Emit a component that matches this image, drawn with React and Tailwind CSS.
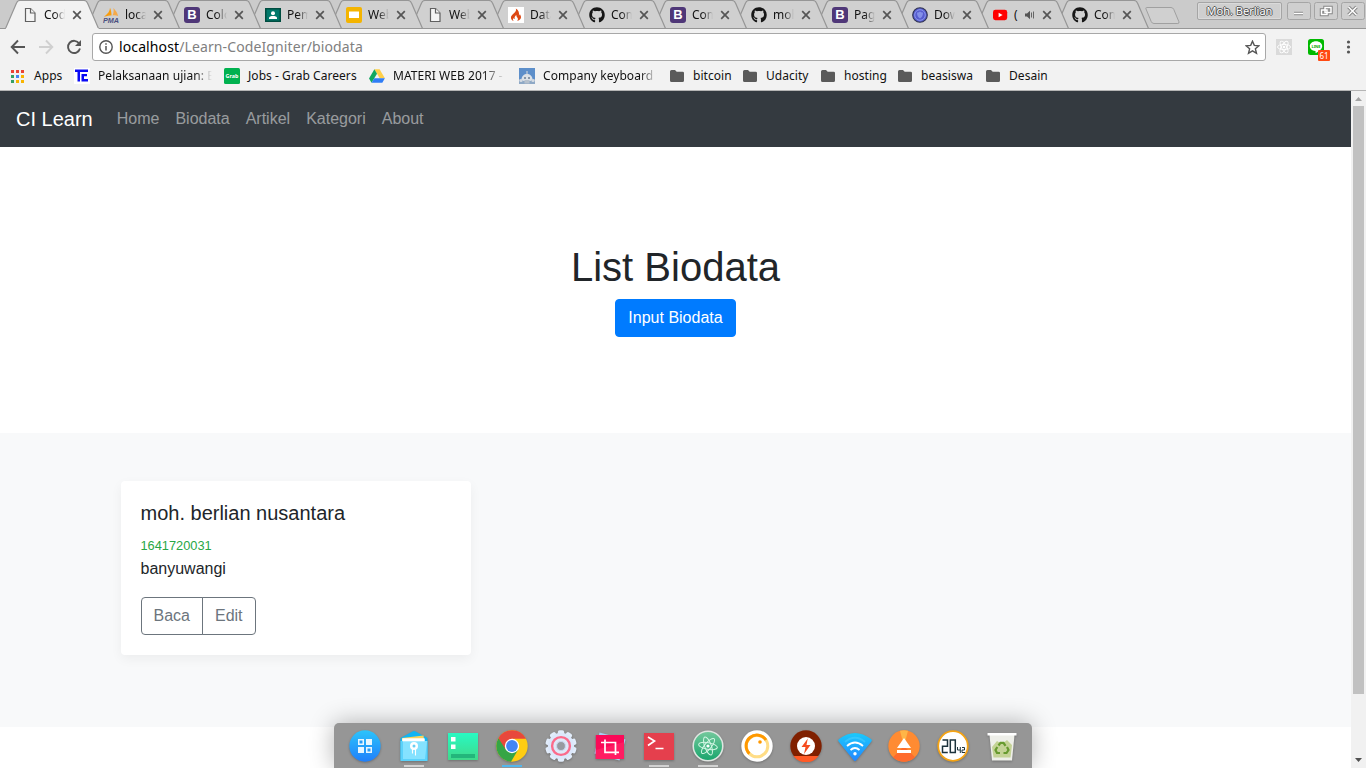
import React from "react";
import { FaGithub } from "react-icons/fa";

const FileIcon = () => (
  <svg width="16" height="16" viewBox="0 0 16 16" fill="#f4f4f4" stroke="#606060" strokeWidth="1.200">
    <path d="M3.500 1.500H8.500l4.500 4.500v8.500H3.500z" /><path d="M8.500 1.500v4.500h4.500" />
  </svg>
);
const PmaIcon = () => (
  <svg width="16" height="16" viewBox="0 0 16 16">
    <path d="M7 .8C7 4 4.800 7 1 9.800c3-.8 5.500-1.200 7.500-1.200C8.500 6 8 3 7 .8z" fill="#f89c0e" />
    <path d="M10.500 1c2.200 2.500 4 5 4.600 8-2-.6-3.600-.8-5.600-.5C10.500 6.500 10.900 4 10.500 1z" fill="#f5a94a" />
    <text x="0" y="15.500" fontSize="7" fontWeight="700" fontStyle="italic" fill="#4a4f80" fontFamily="Liberation Sans" textLength="16" lengthAdjust="spacingAndGlyphs">PMA</text>
  </svg>
);
const BootIcon = () => (
  <span className="flex h-4 w-4 items-center justify-center rounded-[3px] bg-[#4f3778] font-['Liberation_Sans',sans-serif] text-[13px] leading-4 font-bold text-white">B</span>
);
const ClassIcon = () => (
  <svg width="16" height="16" viewBox="0 0 16 16">
    <path d="M0 1h16v14H0z" fill="#004d40" /><path d="M1.500 2.500h13v11h-13z" fill="#00796b" />
    <circle cx="8" cy="6.200" r="2" fill="#fff" /><path d="M4 12v-1c0-2.600 8-2.600 8 0v1z" fill="#fff" />
  </svg>
);
const SlidesIcon = () => (
  <svg width="16" height="16" viewBox="0 0 16 16"><rect width="16" height="16" rx="2" fill="#f4b400" /><path d="M3 4.500h10v6.500H3z" fill="#fff" /></svg>
);
const FlameIcon = () => (
  <svg width="16" height="16" viewBox="0 0 16 16">
    <path d="M0 0h16v16H0z" fill="#fff" />
    <path d="M7.800 1.500c.8 2-.3 3.300-1.900 4.800C4 8 2.600 9.300 3 11.200c.3 1.500 1.400 2.500 2.900 2.900-1-.9-1.300-2-.6-3.200.3.900.9 1.200 1.400 1-.5-1.700.3-2.900 1.700-3.900-.2 1.400.5 1.900 1.100 2.700.7 1 .5 2.400-.4 3.400 2-.4 3.700-1.600 3.900-3.500.2-1.600-.7-2.600-1.200-3.700 0 .8-.3 1.300-.9 1.500C11.500 5.800 10.500 3 7.800 1.500z" fill="#dd4814" />
  </svg>
);
const GitIcon = () => <FaGithub size={16} color="#161616" />;
const RomIcon = () => (
  <svg width="16" height="16" viewBox="0 0 16 16">
    <circle cx="8" cy="8" r="7.300" fill="#565ccf" stroke="#303350" strokeWidth="1.100" />
    <circle cx="8" cy="8" r="5.300" fill="none" stroke="#8c98ec" strokeWidth="1" />
    <path d="M5 5.500c1.500 0 2.300-.5 3-1 .7.500 1.500 1 3 1 0 3-1 5-3 6-2-1-3-3-3-6z" fill="#8490e8" />
  </svg>
);
const TubeIcon = () => (
  <svg width="16" height="16" viewBox="0 0 16 16"><rect x="1" y="2.800" width="14.200" height="10.400" rx="2.400" fill="#f00" /><path d="M6.600 5.700v4.600l4-2.300z" fill="#fff" /></svg>
);
const tabs = [
  ["Code", FileIcon], ["localh", PmaIcon], ["Color", BootIcon], ["Pemr", ClassIcon], ["Web", SlidesIcon],
  ["Web", FileIcon], ["Data", FlameIcon], ["Com", GitIcon], ["Com", BootIcon], ["moh", GitIcon],
  ["Page", BootIcon], ["Dow", RomIcon], ["(", TubeIcon], ["Com", GitIcon],
];

const Tab = ({ title, Icon, index }) => (
  <div className={`relative h-[29px] shrink-0 ${index < 10 ? "w-[81px]" : "w-[80px]"}`} style={{ zIndex: 20 - index }}>
    <svg className="absolute top-0 left-0" width="96" height="29" viewBox="0 0 96 29">
      <path d="M.5 28.500L11.500 3Q12.500 .5 14.800 .5H79Q81.500 .5 82.500 3L93.500 28.500" fill={index === 0 ? "#f2f2f2" : "#d0d0d0"} stroke="#969696" strokeWidth="1.200" />
      {index > 0 && <path d="M0 28.500H95" stroke="#969696" />}
      {index === 0 && <path d="M1 28.500H93.500" stroke="#f2f2f2" strokeWidth="1.200" />}
    </svg>
    <div className="relative flex h-[29px] items-center pl-[17px] pt-px">
      <span className="h-4 w-4 shrink-0"><Icon /></span>
      <span className={`ml-[6px] overflow-hidden whitespace-nowrap text-[12px] leading-4 text-[#111] ${title === "(" ? "w-[8px]" : "w-[21px] [mask-image:linear-gradient(to_right,#000_50%,transparent)]"}`}>{title}</span>
      {title === "(" && (
        <svg className="ml-[3px] shrink-0" width="11" height="10" viewBox="0 0 11 10"><path d="M0 3.500h2L5 .8v8.400L2 6.500H0z" fill="#555" /><path d="M6.500 2.500v5M8.500 1.500v7" stroke="#666" /></svg>
      )}
      <svg className={`shrink-0 ${title === "(" ? "ml-[6px]" : "ml-[7px]"}`} width="10" height="10" viewBox="0 0 10 10"><path d="M1.200 1.200l7.600 7.600M8.800 1.200L1.200 8.800" stroke="#555" strokeWidth="1.700" /></svg>
    </div>
  </div>
);

const Folder = () => (
  <svg width="16" height="16" viewBox="0 0 16 16"><path d="M1 3.500Q1 2 2.500 2H6l1.700 1.700h6q1.300 0 1.300 1.300v7.500q0 1.500-1.500 1.500h-11Q1 14 1 12.500z" fill="#5a5a5a" /></svg>
);
const AppsIcon = () => (
  <svg className="ml-px" width="13" height="13" viewBox="0 0 13 13">
    {["#ea4335", "#ea4335", "#ea4335", "#34a065", "#4285f4", "#f8b400", "#34a065", "#f8b400", "#f8b400"].map((c, i) => (
      <rect key={i} x={(i % 3) * 5} y={Math.floor(i / 3) * 5} width="3" height="3" fill={c} />
    ))}
  </svg>
);
const TeIcon = () => (
  <svg width="16" height="16" viewBox="0 0 16 16"><path d="M0 0h16v16H0z" fill="#fff" /><path d="M1 1.500h13v2.500H1z M3.500 4H6v9.500H3.500zM7.500 6H13v2.200H7.500zM7.500 11H14v2.500H7.500zM7.500 6h2.500v7.500H7.500z" fill="#0b0bf5" /></svg>
);
const GrabIcon = () => (
  <svg width="16" height="16" viewBox="0 0 16 16"><rect width="16" height="16" rx="1.500" fill="#00b14f" /><text x="1.500" y="10" fontSize="6" fontWeight="700" fill="#fff" textLength="13" lengthAdjust="spacingAndGlyphs">Grab</text></svg>
);
const DriveIcon = () => (
  <svg width="16" height="16" viewBox="0 0 16 16"><path d="M5.400 1.300h5.200l5.300 9h-5.200z" fill="#ffcf48" /><path d="M5.400 1.300L0 10.400l2.600 4.400 5.400-9z" fill="#11a861" /><path d="M5.300 10.300h10.600l-2.600 4.500H2.600z" fill="#2f7df6" /></svg>
);
const RobotIcon = () => (
  <svg width="16" height="16" viewBox="0 0 16 16"><path d="M0 0h16v16H0z" fill="#5d8fca" /><path d="M0 11h16v5H0z" fill="#8fa9c6" /><path d="M2.500 11.500C2.500 4 13.500 4 13.500 11.500l-2 1.500h-7z" fill="#dce2e8" /><path d="M5.500 12h5v3.500h-5z" fill="#b6c1cd" /><circle cx="2" cy="12.500" r="1.600" fill="#d5dbe2" /><circle cx="14" cy="12.500" r="1.600" fill="#d5dbe2" /><circle cx="6" cy="10" r="1" fill="#6d7f95" /><circle cx="10" cy="10" r="1" fill="#6d7f95" /><path d="M8 3v4" stroke="#ddd" /></svg>
);
const Mark = ({ icon, children, className }) => (
  <div className={`flex shrink-0 items-center ${className}`}>
    <span className="flex w-6 shrink-0 items-center">{icon}</span>
    {children}
  </div>
);

const RoundIcon = ({ children }) => <svg width="32" height="32" viewBox="0 0 32 32">{children}</svg>;
const gearTeeth = Array.from({ length: 10 }, (_, i) => i * 36);
const dock = [
  <RoundIcon><defs><linearGradient id="la" x2="0" y2="1"><stop stopColor="#2cc4fb" /><stop offset="1" stopColor="#207ffb" /></linearGradient></defs><circle cx="16" cy="16" r="15.700" fill="url(#la)" /><path d="M9 9h6v6H9zM17 9h6v6h-6zM9 17h6v6H9zM17 17h6v6h-6z" fill="#e8f6ff" /><path d="M10.500 10.500h3v3h-3zM18.500 18.500h3v3h-3z" fill="#2a9bf5" /></RoundIcon>,
  <RoundIcon><path d="M2.500 8L14 1.700q2-1.200 4 0L29.500 8V30h-27z" fill="#10b4f4" /><path d="M4 8l21.500-2.500 1 8H4z" fill="#fbd45c" /><path d="M4.500 8.500h22v8h-22z" fill="#fff" /><path d="M2.500 11h27v20h-27z" fill="#5bd2fb" /><path d="M5 11h24l-2 18H5z" fill="#85e2ff" /><path d="M4.500 8.500h22v2.800h-22z" fill="#fff" /><circle cx="16" cy="16" r="4" fill="#fff" /><circle cx="16" cy="16" r="1.500" fill="#68cef3" /><path d="M14.500 19v4.500M17.500 19v6.500" stroke="#fff" strokeWidth="1.100" /></RoundIcon>,
  <RoundIcon><defs><linearGradient id="ga" x2="0" y2="1"><stop stopColor="#28f9c3" /><stop offset="1" stopColor="#40d98a" /></linearGradient></defs><path d="M1 3h30v27H1z" fill="url(#ga)" /><path d="M4 7h4.500v4.500H4zM4 14.500h4.500V19H4z" fill="#fff" /><path d="M4 24h24v4H4z" fill="#23b67b" /></RoundIcon>,
  <RoundIcon>
    <circle cx="16" cy="16" r="15.700" fill="#ffcd12" />
    <path d="M16 16L2.400 8.150A15.700 15.700 0 0 0 15 31.700L22.240 19.600z" fill="#35a545" />
    <path d="M2.400 8.150A15.700 15.700 0 0 1 30 8.800H16L9.760 19.600 2.400 8.150z" fill="#e8483b" />
    <circle cx="16" cy="16" r="7.200" fill="#fff" /><circle cx="16" cy="16" r="5.900" fill="#4285f4" />
  </RoundIcon>,
  <RoundIcon>{gearTeeth.map((a) => <rect key={a} x="12.800" y=".3" width="6.400" height="8" rx="1.800" fill="#e2edfb" transform={`rotate(${a} 16 16)`} />)}<circle cx="16" cy="16" r="13.200" fill="#dce8fb" /><circle cx="16" cy="16" r="8.900" fill="#dfe8f8" stroke="#fb6b8b" strokeWidth="2.400" /><circle cx="16" cy="16" r="4.500" fill="#979aa0" stroke="#c9d6ec" strokeWidth="1.200" /></RoundIcon>,
  <RoundIcon><path d="M5.500 2.500l26 7-6 21-25-7z" fill="#a8cdf2" /><path d="M1.800 5H30v24H1.800z" fill="#fb0958" /><path d="M1.800 20L30 12v17H1.800z" fill="#ff1c62" /><path d="M11 9.500v12.800h14M7 12.500h14.500V25" fill="none" stroke="#fff" strokeWidth="1.700" /></RoundIcon>,
  <RoundIcon><path d="M1 3h30v27H1z" fill="#e53f4d" /><path d="M5 7l6.500 4L5 15.500M12.500 18.500h8" fill="none" stroke="#fff" strokeWidth="1.700" /></RoundIcon>,
  <RoundIcon><defs><linearGradient id="at" x2="0" y2="1"><stop stopColor="#75c99d" /><stop offset="1" stopColor="#18a56c" /></linearGradient></defs><circle cx="16" cy="16" r="14.800" fill="url(#at)" stroke="#dfe5e1" strokeWidth="1.600" /><g fill="none" stroke="#d4f7e5" strokeWidth="1"><ellipse cx="16" cy="16" rx="3.300" ry="9.500" transform="rotate(-20 16 16)" /><ellipse cx="16" cy="16" rx="3.300" ry="9.500" transform="rotate(40 16 16)" /><ellipse cx="16" cy="16" rx="3.300" ry="9.500" transform="rotate(100 16 16)" /></g><circle cx="16" cy="16" r="1.600" fill="#fff" /></RoundIcon>,
  <RoundIcon><circle cx="16" cy="16" r="15.700" fill="#fff" /><circle cx="16" cy="16" r="10.800" fill="none" stroke="#ffdd86" strokeWidth="3" /><path d="M8.400 23.600A10.800 10.800 0 1 1 25 10" fill="none" stroke="#ff9800" strokeWidth="3" /><circle cx="19" cy="12" r="1.800" fill="#ff9800" /></RoundIcon>,
  <RoundIcon><circle cx="16" cy="16" r="15.700" fill="#802000" /><path d="M3.400 26h25.200A15.700 15.700 0 0 1 3.400 26z" fill="#ff5a26" /><circle cx="16" cy="16" r="9" fill="#fff" /><path d="M17.800 8.500L11.500 17h4l-1.500 7 6.500-9h-4z" fill="#f64d20" /></RoundIcon>,
  <svg width="34" height="32" viewBox="0 0 34 32"><defs><linearGradient id="wi" x2="0" y2="1"><stop stopColor="#1bcafc" /><stop offset="1" stopColor="#2386ff" /></linearGradient></defs><path d="M1 9Q17-3 33 9q1.500 1.200.2 2.700L18.500 30q-1.500 2-3 0L.8 11.700Q-.5 10.200 1 9z" fill="url(#wi)" /><path d="M7 12q10-8.500 20 0" stroke="#68d9ff" strokeWidth="1.800" fill="none" opacity=".35" /><path d="M9 16q8-7 16 0M12.500 20q4.500-4 9 0" stroke="#fff" strokeWidth="1.800" fill="none" /><circle cx="17" cy="23.800" r="1.700" fill="#fff" /></svg>,
  <RoundIcon><circle cx="16" cy="16" r="15.700" fill="#ff8b32" /><path d="M16 16L12 .8a15.700 15.700 0 0 1 8 0z" fill="#ffb547" /><path d="M16 16L5 27.200a15.700 15.700 0 0 0 22 0z" fill="#ff6b2d" /><path d="M16 8l7 10H9zM9 20h14v3H9z" fill="#fff" /></RoundIcon>,
  <RoundIcon><circle cx="16" cy="16" r="14.800" fill="#fff" stroke="#f5a313" strokeWidth="1.800" /><g fill="none" stroke="#1d333c" strokeWidth="1.500"><path d="M5.500 10h5v6.300H5.500v6.200h5.300M13.300 10h5v12.500h-5z" /></g><g fill="none" stroke="#1d333c" strokeWidth="1"><path d="M20.500 17v3h2.800M23.300 17v6M25 17.500h2.500v2.500H25v2.500h3" /></g></RoundIcon>,
  <RoundIcon><path d="M3.500 5h25l-2.500 25.500H6z" fill="#eeefe9" /><path d="M6 17l5-6 5 3 5-4 5 5-1.500 12.500h-17z" fill="#c4d396" /><path d="M1.500 3h29v2.500h-29z" fill="#fff" /><path d="M12.500 15.500l2-2.700h3l2 3M21 17l1.500 3-2 3h-3M14 23h-3l-1.500-3 1.800-3" fill="none" stroke="#679a2f" strokeWidth="2.200" /></RoundIcon>,
];
const running = { 1: "bg-[#d2d2d2]", 3: "bg-[#52b7ed]", 6: "bg-[#d2d2d2]", 7: "bg-[#d2d2d2]" };

const windowGlyphs = [
  <path key="a" d="M5 10.500h9" />,
  <g key="b"><path d="M9 4.500h6v5H9z" /><path d="M5.500 7h5.500v4.500H5.500z" /></g>,
  <path key="c" d="M5.500 4l8 8M13.500 4l-8 8" />,
];

export default function App() {
  return (
    <div className="relative flex h-[768px] w-[1366px] flex-col overflow-hidden bg-white font-['Noto_Sans',sans-serif] text-[12px] text-[#111]">
      <div className="flex h-[29px] shrink-0 border-b border-[#969696] bg-[#cbcbcb] pl-[5px]">
        <div className="isolate flex h-[29px]">
          {tabs.map(([title, Icon], i) => <Tab key={i} title={title} Icon={Icon} index={i} />)}
        </div>
        <svg className="ml-[10px] mt-[7px] shrink-0" width="35" height="18" viewBox="0 0 35 18"><path d="M1.500 .5H26q2 0 2.800 2l5 12q.8 2-1 2H9q-2 0-2.800-2L1 2Q.5 .5 1.500 .5z" fill="#d0d0d0" stroke="#a0a0a0" /></svg>
        <div className="ml-[17px] flex gap-[2px] pt-[2px]">
          <div className="flex h-[18px] w-[85px] items-center justify-center rounded-[2px] border border-[#a5a5a5] bg-[#cfcfcf] text-[11px] text-white shadow-[inset_0_0_0_1px_#dadada] [text-shadow:1px_0_0_#555,-1px_0_0_#555,0_1px_0_#555,0_-1px_0_#555]">Moh. Berlian</div>
          {windowGlyphs.map((g, i) => (
            <svg key={i} className={i === 0 ? "ml-[3px]" : "ml-px"} width="24" height="18" viewBox="0 0 24 18">
              <rect x=".5" y=".5" width="23" height="17" rx="2" fill="#cfcfcf" stroke="#a5a5a5" />
              <g transform="translate(2 1)" fill="none"><g stroke="#858585" strokeWidth="3.400">{g}</g><g stroke="#fff" strokeWidth="1.500">{g}</g></g>
            </svg>
          ))}
        </div>
      </div>

      <div className="flex h-[36px] shrink-0 items-center bg-[#f2f2f2] text-[#555]">
        <svg className="ml-[10px]" width="16" height="16" viewBox="0 0 16 16" fill="none" stroke="#555" strokeWidth="1.900"><path d="M15 8H2M8 1.500L1.700 8 8 14.500" /></svg>
        <svg className="ml-[12px]" width="16" height="16" viewBox="0 0 16 16" fill="none" stroke="#d0d0d0" strokeWidth="1.900"><path d="M1 8h13M8 1.500L14.300 8 8 14.500" /></svg>
        <svg className="ml-[12px]" width="16" height="16" viewBox="0 0 16 16"><path d="M13.200 4.500A6.100 6.100 0 1 0 14 9.600" fill="none" stroke="#555" strokeWidth="1.900" /><path d="M15 1v6H9z" fill="#555" /></svg>
        <div className="ml-[10px] flex h-[28px] w-[1174px] items-center rounded-[3px] border border-[#a8a8a8] bg-white pr-[5px] pl-[6px]">
          <svg width="14" height="14" viewBox="0 0 14 14"><circle cx="7" cy="7" r="6.200" fill="none" stroke="#555" strokeWidth="1.400" /><path d="M7 6v4.500M7 3.300v1.500" stroke="#555" strokeWidth="1.500" /></svg>
          <span className="ml-[6px] text-[14px] leading-5 tracking-[0.115px] text-[#808080]"><span className="text-black">localhost</span>/Learn-CodeIgniter/biodata</span>
          <svg className="ml-auto" width="15" height="15" viewBox="0 0 15 15"><path d="M7.500 1.200l1.800 4.200 4.600.4-3.500 3 1.100 4.500-4-2.400-4 2.400 1.100-4.500-3.500-3 4.600-.4z" fill="none" stroke="#555" strokeWidth="1.400" /></svg>
        </div>
        <svg className="ml-[10px]" width="16" height="16" viewBox="0 0 16 16"><path d="M0 0h16v16H0z" fill="#dadada" /><g fill="none" stroke="#fff" strokeWidth=".9"><ellipse cx="8" cy="8" rx="6.500" ry="2.600" /><ellipse cx="8" cy="8" rx="6.500" ry="2.600" transform="rotate(60 8 8)" /><ellipse cx="8" cy="8" rx="6.500" ry="2.600" transform="rotate(120 8 8)" /></g><circle cx="8" cy="8" r="1.300" fill="#fff" /></svg>
        <div className="relative ml-[16px]">
          <svg width="16" height="16" viewBox="0 0 16 16"><rect width="16" height="16" rx="2.500" fill="#00b900" /><path d="M8 2.200c-3.600 0-6.200 2.200-6.200 5 0 2.500 2.200 4.500 5.300 4.900.8.200.5.900.4 2 2.500-1.200 6.700-4 6.700-6.900 0-2.800-2.600-5-6.200-5z" fill="#fff" /><text x="3.500" y="8.800" fontSize="4" fontWeight="700" fill="#00a900" textLength="9">LINE</text></svg>
          <span className="absolute top-[11px] left-[10px] flex h-[11px] w-[12px] items-center justify-center rounded-[1px] bg-[#ff4a12] text-[8px] leading-none text-white">61</span>
        </div>
        <svg className="ml-[22px]" width="6" height="16" viewBox="0 0 6 16" fill="#555"><circle cx="2.500" cy="3" r="1.600" /><circle cx="2.500" cy="8" r="1.600" /><circle cx="2.500" cy="13" r="1.600" /></svg>
      </div>

      <div className="flex h-[26px] shrink-0 items-center border-b border-[#b5b5b5] bg-[#f2f2f2] pb-[3px] pl-[10px] tracking-[0.05px] whitespace-nowrap">
        <Mark icon={<AppsIcon />} className="w-[64px]">Apps</Mark>
        <Mark icon={<TeIcon />} className="w-[150px]"><span className="w-[114px] overflow-hidden [mask-image:linear-gradient(to_right,#000_85%,transparent)]">Pelaksanaan ujian: Bas</span></Mark>
        <Mark icon={<GrabIcon />} className="w-[145px]">Jobs - Grab Careers</Mark>
        <Mark icon={<DriveIcon />} className="w-[150px]"><span className="w-[112px] overflow-hidden [mask-image:linear-gradient(to_right,#000_80%,transparent)]">MATERI WEB 2017 - G</span></Mark>
        <Mark icon={<RobotIcon />} className="w-[150px]"><span className="w-[114px] overflow-hidden [mask-image:linear-gradient(to_right,#000_85%,transparent)]">Company keyboard to</span></Mark>
        <Mark icon={<Folder />} className="w-[73px]">bitcoin</Mark>
        <Mark icon={<Folder />} className="w-[78px]">Udacity</Mark>
        <Mark icon={<Folder />} className="w-[77px]">hosting</Mark>
        <Mark icon={<Folder />} className="w-[88px]">beasiswa</Mark>
        <Mark icon={<Folder />} className="w-[80px]">Desain</Mark>
      </div>

      <div className="flex min-h-0 flex-1">
        <main className="flex w-[1351px] flex-col font-['Liberation_Sans',Arial,sans-serif] text-[16px] leading-6 text-[#212529]">
          <nav className="flex h-[56px] shrink-0 items-center gap-4 bg-[#343a40] px-4 text-white/50">
            <span className="mr-2 text-[20px] leading-[30px] text-white">CI Learn</span>
            <a>Home</a><a>Biodata</a><a>Artikel</a><a>Kategori</a><a>About</a>
          </nav>
          <section className="flex h-[286px] shrink-0 flex-col items-center py-24">
            <h1 className="mb-2 text-[40px] leading-[48px] font-medium">List Biodata</h1>
            <button className="h-[38px] rounded-[4px] border border-[#007bff] bg-[#007bff] px-3 text-white">Input Biodata</button>
          </section>
          <section className="h-[294px] shrink-0 bg-[#f8f9fa] pt-12 pl-[120.500px]">
            <article className="w-[350px] rounded-[4px] bg-white p-5 shadow-[0_4px_12px_rgba(0,0,0,0.05)]">
              <h5 className="mb-2 text-[20px] leading-6">moh. berlian nusantara</h5>
              <div className="h-6 text-[#28a745]"><small className="text-[12.800px]">1641720031</small></div>
              <p className="mb-4">banyuwangi</p>
              <div className="flex text-[#6c757d]">
                <button className="h-[38px] rounded-l-[4px] border border-[#6c757d] px-3">Baca</button>
                <button className="-ml-px h-[38px] rounded-r-[4px] border border-[#6c757d] px-3">Edit</button>
              </div>
            </article>
          </section>
        </main>
        <div className="flex w-[15px] flex-col items-center bg-[#f1f1f1]">
          <svg width="15" height="15" viewBox="0 0 15 15"><path d="M4 10h7L7.500 6z" fill="#a3a3a3" /></svg>
          <div className="h-[588px] w-[11px] bg-[#c1c1c1]" />
          <svg className="mt-auto" width="15" height="15" viewBox="0 0 15 15"><path d="M4 5h7L7.500 9z" fill="#505050" /></svg>
        </div>
      </div>

      <div className="absolute top-[723px] left-[334px] z-30 flex h-[45px] w-[698px] gap-[1px] rounded-t-[5px] bg-[#969696] pl-[7px] shadow-[0_0_24px_rgba(0,0,0,0.3)]">
        {dock.map((icon, i) => (
          <div key={i} className="flex w-12 shrink-0 flex-col items-center pt-[7px]">
            <div className="drop-shadow-[0_1px_1px_rgba(0,0,0,0.25)]">{icon}</div>
            {running[i] && <div className={`mt-[3px] h-[2px] w-5 ${running[i]}`} />}
          </div>
        ))}
      </div>
    </div>
  );
}
